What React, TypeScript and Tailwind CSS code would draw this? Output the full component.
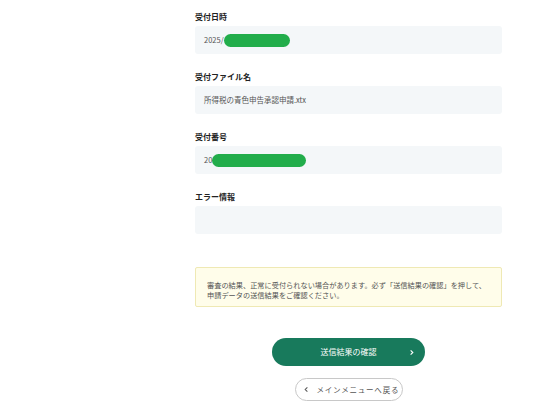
const fields = [
  { label: "受付日時", value: "2025/", mask: "w-[66px]" },
  { label: "受付ファイル名", value: "所得税の青色申告承認申請.xtx", mask: "" },
  { label: "受付番号", value: "20", mask: "w-[94px]" },
  { label: "エラー情報", value: "", mask: "" },
];

export default function App() {
  return (
    <main
      className="min-h-[415px] w-[550px] bg-white"
      style={{ fontFamily: '"Noto Sans CJK JP", "Noto Sans", sans-serif' }}
    >
      <div className="ml-[195px] flex w-[307px] flex-col pt-[11px]">
        {fields.map((field) => (
          <section key={field.label} className="mb-[17px] flex flex-col gap-[3px]">
            <p className="text-[8px] font-bold leading-[12px] text-[#222]">
              {field.label}
            </p>
            <div className="flex h-[28px] items-center rounded-[3px] bg-[#f4f7f9] pl-[9px] text-[7.5px] text-[#555]">
              <span>{field.value}</span>
              {field.mask && (
                <span className={`h-[13px] rounded-full bg-[#22ad4b] ${field.mask}`} />
              )}
            </div>
          </section>
        ))}

        <div className="mt-[16px] rounded-[2px] border border-[#efe9b4] bg-[#fffdea] px-[11px] pb-[6px] pt-[12px] text-[7.2px] leading-[10px] text-[#555]">
          <p>審査の結果、正常に受付られない場合があります。必ず「送信結果の確認」を押して、</p>
          <p>申請データの送信結果をご確認ください。</p>
        </div>

        <div className="mt-[31px] flex flex-col items-center gap-[12px]">
          <button className="relative flex h-[28px] w-[153px] items-center justify-center rounded-full bg-[#187a5c] text-[8px] text-white">
            送信結果の確認
            <svg
              className="absolute right-[10px] h-[7px] w-[7px]"
              viewBox="0 0 8 8"
              fill="none"
              stroke="white"
              strokeWidth="1.3"
            >
              <path d="M3 1.5 5.5 4 3 6.5" />
            </svg>
          </button>
          <button className="flex h-[23px] w-[108px] items-center gap-[7px] whitespace-nowrap rounded-full border border-[#c8c8c8] bg-white pl-[7px] text-[7.5px] tracking-[0.8px] text-[#555]">
            <svg
              className="h-[7px] w-[7px] shrink-0"
              viewBox="0 0 8 8"
              fill="none"
              stroke="#555"
              strokeWidth="1.2"
            >
              <path d="M5 1.5 2.5 4 5 6.5" />
            </svg>
            <span>メインメニューへ戻る</span>
          </button>
        </div>
      </div>
    </main>
  );
}
